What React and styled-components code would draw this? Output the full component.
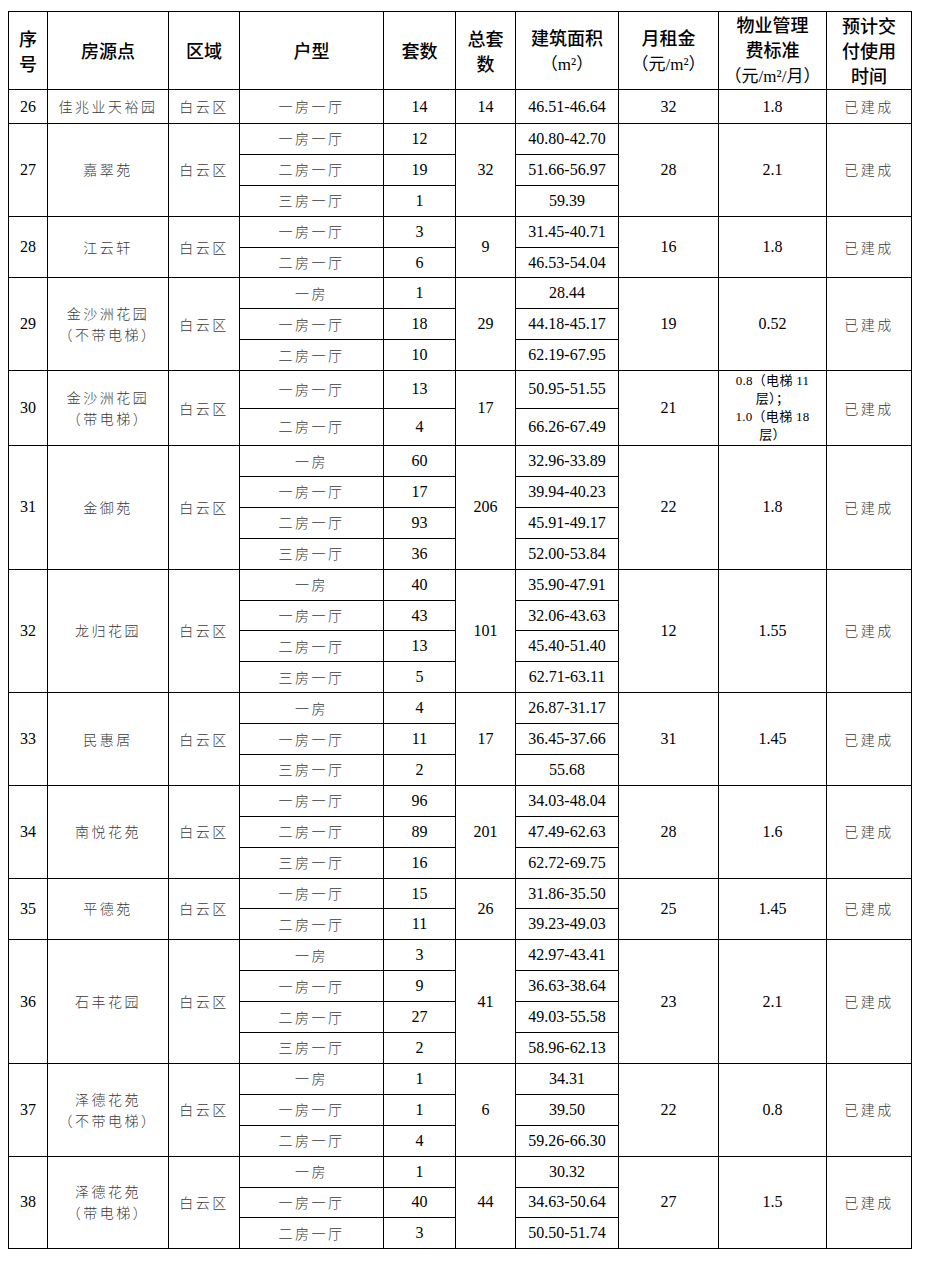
import React from "react";
import styled, { createGlobalStyle } from "styled-components";

const rows = [
  { no: 26, name: ["佳兆业天裕园"], units: [["一房一厅", 14, "46.51-46.64"]], total: 14, rent: 32, fee: "1.8", h: 34 },
  { no: 27, name: ["嘉翠苑"], units: [["一房一厅", 12, "40.80-42.70"], ["二房一厅", 19, "51.66-56.97"], ["三房一厅", 1, "59.39"]], total: 32, rent: 28, fee: "2.1" },
  { no: 28, name: ["江云轩"], units: [["一房一厅", 3, "31.45-40.71"], ["二房一厅", 6, "46.53-54.04"]], total: 9, rent: 16, fee: "1.8" },
  { no: 29, name: ["金沙洲花园", "（不带电梯）"], units: [["一房", 1, "28.44"], ["一房一厅", 18, "44.18-45.17"], ["二房一厅", 10, "62.19-67.95"]], total: 29, rent: 19, fee: "0.52" },
  { no: 30, name: ["金沙洲花园", "（带电梯）"], units: [["一房一厅", 13, "50.95-51.55"], ["二房一厅", 4, "66.26-67.49"]], total: 17, rent: 21, fee: null, h: 37.5 },
  { no: 31, name: ["金御苑"], units: [["一房", 60, "32.96-33.89"], ["一房一厅", 17, "39.94-40.23"], ["二房一厅", 93, "45.91-49.17"], ["三房一厅", 36, "52.00-53.84"]], total: 206, rent: 22, fee: "1.8" },
  { no: 32, name: ["龙归花园"], units: [["一房", 40, "35.90-47.91"], ["一房一厅", 43, "32.06-43.63"], ["二房一厅", 13, "45.40-51.40"], ["三房一厅", 5, "62.71-63.11"]], total: 101, rent: 12, fee: "1.55" },
  { no: 33, name: ["民惠居"], units: [["一房", 4, "26.87-31.17"], ["一房一厅", 11, "36.45-37.66"], ["三房一厅", 2, "55.68"]], total: 17, rent: 31, fee: "1.45" },
  { no: 34, name: ["南悦花苑"], units: [["一房一厅", 96, "34.03-48.04"], ["二房一厅", 89, "47.49-62.63"], ["三房一厅", 16, "62.72-69.75"]], total: 201, rent: 28, fee: "1.6" },
  { no: 35, name: ["平德苑"], units: [["一房一厅", 15, "31.86-35.50"], ["二房一厅", 11, "39.23-49.03"]], total: 26, rent: 25, fee: "1.45" },
  { no: 36, name: ["石丰花园"], units: [["一房", 3, "42.97-43.41"], ["一房一厅", 9, "36.63-38.64"], ["二房一厅", 27, "49.03-55.58"], ["三房一厅", 2, "58.96-62.13"]], total: 41, rent: 23, fee: "2.1" },
  { no: 37, name: ["泽德花苑", "（不带电梯）"], units: [["一房", 1, "34.31"], ["一房一厅", 1, "39.50"], ["二房一厅", 4, "59.26-66.30"]], total: 6, rent: 22, fee: "0.8" },
  { no: 38, name: ["泽德花苑", "（带电梯）"], units: [["一房", 1, "30.32"], ["一房一厅", 40, "34.63-50.64"], ["二房一厅", 3, "50.50-51.74"]], total: 44, rent: 27, fee: "1.5" },
];

const widths = [39, 121, 71, 144, 72, 60, 103, 100, 108, 85];

export default function App() {
  return (
    <>
      <GlobalStyle />
      <Table>
        <colgroup>
          {widths.map((w, i) => (
            <col key={i} style={{ width: w }} />
          ))}
        </colgroup>
        <thead>
          <HeadRow>
            <Th>序<br />号</Th>
            <Th>房源点</Th>
            <Th>区域</Th>
            <Th>户型</Th>
            <Th>套数</Th>
            <Th>总套<br />数</Th>
            <Th>建筑面积<br /><Unit>（m²）</Unit></Th>
            <Th>月租金<br /><Unit>（元/m²）</Unit></Th>
            <Th>物业管理<br />费标准<br /><Unit>（元/m²/月）</Unit></Th>
            <Th>预计交<br />付使用<br />时间</Th>
          </HeadRow>
        </thead>
        <tbody>
          {rows.map((r) =>
            r.units.map((u, i) => {
              const span = r.units.length;
              return (
                <Row key={r.no + "-" + i} $h={r.h || 30.9}>
                  {i === 0 && (
                    <>
                      <Num rowSpan={span}>{r.no}</Num>
                      <Cjk rowSpan={span}>
                        {r.name.map((n, k) => (
                          <Line key={k}>{n}</Line>
                        ))}
                      </Cjk>
                      <Cjk rowSpan={span}>白云区</Cjk>
                    </>
                  )}
                  <Cjk>{u[0]}</Cjk>
                  <Num>{u[1]}</Num>
                  {i === 0 && <Num rowSpan={span}>{r.total}</Num>}
                  <Num>{u[2]}</Num>
                  {i === 0 && (
                    <>
                      <Num rowSpan={span}>{r.rent}</Num>
                      {r.fee ? (
                        <Num rowSpan={span}>{r.fee}</Num>
                      ) : (
                        <Small rowSpan={span}>
                          0.8（电梯 11<br />层）；<br />1.0（电梯 18<br />层）
                        </Small>
                      )}
                      <Cjk rowSpan={span}>已建成</Cjk>
                    </>
                  )}
                </Row>
              );
            })
          )}
        </tbody>
      </Table>
    </>
  );
}

const GlobalStyle = createGlobalStyle`
  body {
    margin: 11px 0 0 8px;
    background: #fff;
    font-family: "Liberation Serif", "Noto Sans CJK SC", serif;
  }
`;

const Table = styled.table`
  border-collapse: collapse;
  table-layout: fixed;
  width: 904px;
  color: #000;
`;

const HeadRow = styled.tr`
  height: 74px;
`;

const Th = styled.th`
  border: 1px solid #000;
  padding: 0;
  font-family: "Noto Sans CJK SC", sans-serif;
  font-weight: 500;
  font-size: 18px;
  line-height: 25px;
  text-align: center;
  vertical-align: middle;
`;

const Unit = styled.span`
  font-family: "Liberation Serif", "Noto Sans CJK SC", serif;
  font-weight: 400;
  font-size: 17px;
`;

const Row = styled.tr`
  height: ${({ $h }) => $h}px;
`;

const Td = styled.td`
  border: 1px solid #000;
  padding: 0;
  text-align: center;
  vertical-align: middle;
`;

const Num = styled(Td)`
  font-family: "Liberation Serif", serif;
  font-size: 16px;
  line-height: 20px;
`;

const Cjk = styled(Td)`
  font-family: "Noto Sans CJK SC", sans-serif;
  font-weight: 300;
  font-size: 14px;
  letter-spacing: 2.5px;
  line-height: 21px;
  color: #3a3a3a;
`;

const Line = styled.div``;

const Small = styled(Td)`
  font-family: "Liberation Serif", "Noto Sans CJK SC", serif;
  font-size: 13px;
  line-height: 18px;
  letter-spacing: 0.3px;
`;
